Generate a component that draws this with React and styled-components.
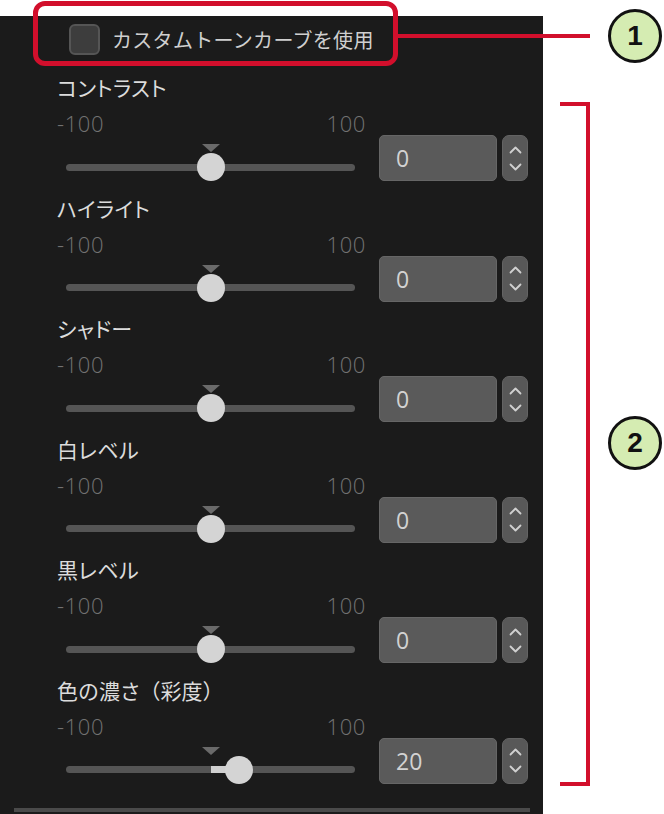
import React from 'react';
import styled, { createGlobalStyle } from 'styled-components';

const GlobalStyle = createGlobalStyle`
  html, body {
    margin: 0;
    padding: 0;
    background: #ffffff;
  }
  body {
    font-family: "Noto Sans CJK JP", "Noto Sans", sans-serif;
  }
`;

const sliders = [
  { label: 'コントラスト', value: 0 },
  { label: 'ハイライト', value: 0 },
  { label: 'シャドー', value: 0 },
  { label: '白レベル', value: 0 },
  { label: '黒レベル', value: 0 },
  { label: '色の濃さ', note: '（彩度）', value: 20 },
];

function Chevron({ up }) {
  return (
    <svg width="13" height="8" viewBox="0 0 13 8">
      <path
        d={up ? 'M1.5 6.5 L6.5 1.5 L11.5 6.5' : 'M1.5 1.5 L6.5 6.5 L11.5 1.5'}
        fill="none"
        stroke="#d0d0d0"
        strokeWidth="1.8"
        strokeLinecap="round"
        strokeLinejoin="round"
      />
    </svg>
  );
}

function SliderRow({ label, note, value }) {
  const pct = ((value + 100) / 200) * 100;
  const fillLeft = Math.min(pct, 50);
  const fillWidth = Math.abs(pct - 50);

  return (
    <Section>
      <Left>
        <Label>
          {label}
          {note && <Note>{note}</Note>}
        </Label>
        <Range>
          <span>-100</span>
          <span>100</span>
        </Range>
        <Slider>
          <Track />
          <Marker />
          {fillWidth > 0 && (
            <Fill style={{ left: `${fillLeft}%`, width: `${fillWidth}%` }} />
          )}
          <Thumb style={{ left: `calc(${pct}% - 14px)` }} />
        </Slider>
      </Left>
      <Controls>
        <ValueBox>{value}</ValueBox>
        <Spinner>
          <Chevron up />
          <Chevron />
        </Spinner>
      </Controls>
    </Section>
  );
}

export default function App() {
  return (
    <Page>
      <GlobalStyle />
      <Panel>
        <Header>
          <Checkbox />
          <CheckLabel>カスタムトーンカーブを使用</CheckLabel>
        </Header>
        {sliders.map((s) => (
          <SliderRow key={s.label} label={s.label} note={s.note} value={s.value} />
        ))}
        <Separator />
      </Panel>

      <RedBox />
      <Connector />
      <Badge style={{ top: 9 }}>1</Badge>
      <Bracket />
      <Badge style={{ top: 416 }}>2</Badge>
    </Page>
  );
}

const Page = styled.div`
  position: relative;
  width: 664px;
  height: 814px;
  overflow: hidden;
  background: #ffffff;
`;

const Panel = styled.div`
  margin-top: 16px;
  width: 543px;
  height: 798px;
  box-sizing: border-box;
  padding-top: 8px;
  background: #1b1b1b;
  display: flex;
  flex-direction: column;
`;

const Header = styled.div`
  height: 48px;
  padding-left: 69px;
  display: flex;
  align-items: flex-start;
  gap: 12px;
`;

const Checkbox = styled.div`
  width: 31px;
  height: 31px;
  box-sizing: border-box;
  border: 2px solid #555555;
  border-radius: 6px;
  background: #3d3d3d;
`;

const CheckLabel = styled.span`
  font-size: 20px;
  line-height: 31px;
  color: #cfcfcf;
  letter-spacing: 0.3px;
`;

const Section = styled.div`
  height: 120.6px;
  flex-shrink: 0;
  padding-left: 57px;
  display: flex;
  align-items: flex-start;
`;

const Left = styled.div`
  width: 309px;
  display: flex;
  flex-direction: column;
`;

const Label = styled.div`
  font-size: 21px;
  line-height: 30px;
  height: 30px;
  color: #dcdcdc;
  font-feature-settings: "palt";
  letter-spacing: 0.4px;
  white-space: nowrap;
`;

const Note = styled.span`
  font-feature-settings: normal;
  letter-spacing: 0;
`;

const Range = styled.div`
  margin-top: 7px;
  height: 28px;
  display: flex;
  justify-content: space-between;
  font-family: "Open Sans", "Noto Sans", sans-serif;
  font-weight: 300;
  font-size: 22px;
  line-height: 28px;
  letter-spacing: 0.6px;
  color: #727272;
`;

const Slider = styled.div`
  position: relative;
  margin: 16px 11px 0 9px;
  height: 28px;
  display: flex;
  align-items: center;
`;

const Track = styled.div`
  width: 100%;
  height: 7px;
  border-radius: 4px;
  background: #555555;
`;

const Marker = styled.div`
  position: absolute;
  left: calc(50% - 9px);
  top: -9px;
  width: 0;
  height: 0;
  border-left: 9px solid transparent;
  border-right: 9px solid transparent;
  border-top: 8px solid #6a6a6a;
`;

const Fill = styled.div`
  position: absolute;
  top: 10.5px;
  height: 7px;
  background: #d0d0d0;
`;

const Thumb = styled.div`
  position: absolute;
  top: 0;
  width: 28px;
  height: 28px;
  border-radius: 50%;
  background: #d4d4d4;
`;

const Controls = styled.div`
  margin-top: 63px;
  margin-left: 13px;
  display: flex;
  gap: 5px;
`;

const ValueBox = styled.div`
  width: 118px;
  height: 46px;
  box-sizing: border-box;
  padding-left: 16px;
  border: 1px solid #666666;
  border-radius: 5px;
  background: #5a5a5a;
  font-family: "Open Sans", "Noto Sans", sans-serif;
  font-size: 23px;
  line-height: 44px;
  color: #d2d2d2;
`;

const Spinner = styled.div`
  width: 26px;
  height: 46px;
  box-sizing: border-box;
  border: 1px solid #636363;
  border-radius: 7px;
  background: #585858;
  display: flex;
  flex-direction: column;
  align-items: center;
  justify-content: center;
  gap: 9px;
`;

const Separator = styled.div`
  margin: 12px 0 0 14px;
  width: 516px;
  height: 4px;
  background: #4a4a4a;
`;

const RedBox = styled.div`
  position: absolute;
  left: 33px;
  top: 1px;
  width: 365px;
  height: 65px;
  box-sizing: border-box;
  border: 5px solid #d20f2c;
  border-radius: 12px;
`;

const Connector = styled.div`
  position: absolute;
  left: 397px;
  top: 34px;
  width: 193px;
  height: 4px;
  background: #d20f2c;
`;

const Bracket = styled.div`
  position: absolute;
  left: 560px;
  top: 102px;
  width: 30px;
  height: 684px;
  box-sizing: border-box;
  border: 4px solid #d20f2c;
  border-left: none;
`;

const Badge = styled.div`
  position: absolute;
  left: 608px;
  width: 54px;
  height: 54px;
  box-sizing: border-box;
  border: 3px solid #111111;
  border-radius: 50%;
  background: #d5ecb2;
  display: flex;
  align-items: center;
  justify-content: center;
  font-family: "Liberation Sans", Arial, sans-serif;
  font-weight: 700;
  font-size: 28px;
  color: #111111;
`;
